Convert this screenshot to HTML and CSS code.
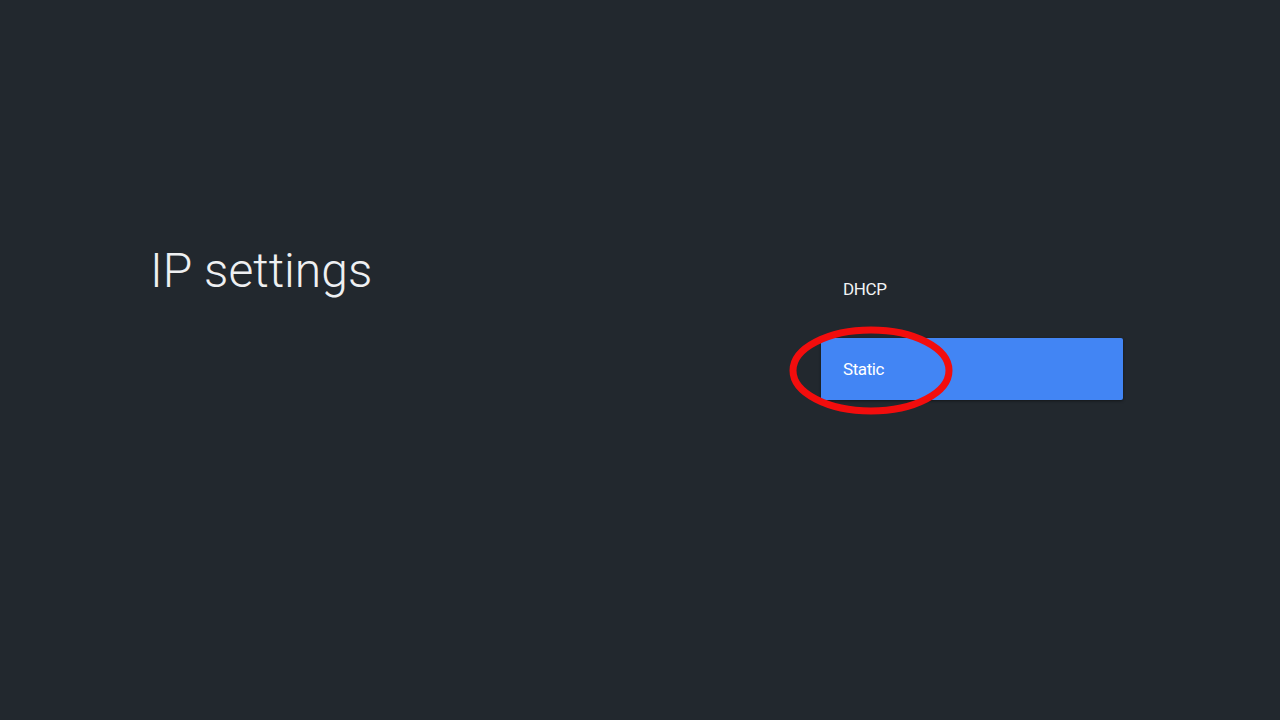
FILE: index.html
```html
<!DOCTYPE html>
<html lang="en">
<head>
    <meta charset="UTF-8">
    <meta name="viewport" content="width=device-width, initial-scale=1.0">
    <title>IP settings</title>
    <link rel="stylesheet" href="styles.css">
</head>
<body>
    <div class="screen">
        <!-- 左侧标题 -->
        <div class="title-pane">
            <h1 class="title">IP settings</h1>
        </div>

        <!-- 右侧选项列表 -->
        <div class="option-list">
            <div class="option">DHCP</div>
            <div class="option option-focused">
                Static
                <svg class="mark" width="164" height="89" viewBox="0 0 164 89">
                    <ellipse cx="82" cy="44.5" rx="78" ry="40.5" fill="none" stroke="#f20d0d" stroke-width="7"/>
                </svg>
            </div>
        </div>
    </div>
</body>
</html>
```
FILE: styles.css
```css
html, body {
    margin: 0;
    padding: 0;
    background: #22282e;
}

.screen {
    display: flex;
    width: 1280px;
    height: 720px;
    font-family: Roboto, "Noto Sans", sans-serif;
    color: #eceff1;
}

/* 标题区域 */
.title-pane {
    width: 671px;
    padding: 241px 0 0 150px;
}

.title {
    margin: 0;
    font-size: 48px;
    font-weight: 300;
    line-height: 60px;
    color: #eef0f2;
}

/* 选项列表 */
.option-list {
    width: 302px;
    padding-top: 258px;
    display: flex;
    flex-direction: column;
    gap: 18px;
}

.option {
    position: relative;
    height: 62px;
    padding-left: 22px;
    display: flex;
    align-items: center;
    font-size: 17px;
    letter-spacing: -0.4px;
    color: #f1f3f4;
}

.option-focused {
    background: #4285f4;
    border-radius: 2px;
    box-shadow: 0 1px 3px rgba(0, 0, 0, 0.45);
    color: #ffffff;
}

/* 红色圈注 */
.mark {
    position: absolute;
    left: -32px;
    top: -12px;
}
```
